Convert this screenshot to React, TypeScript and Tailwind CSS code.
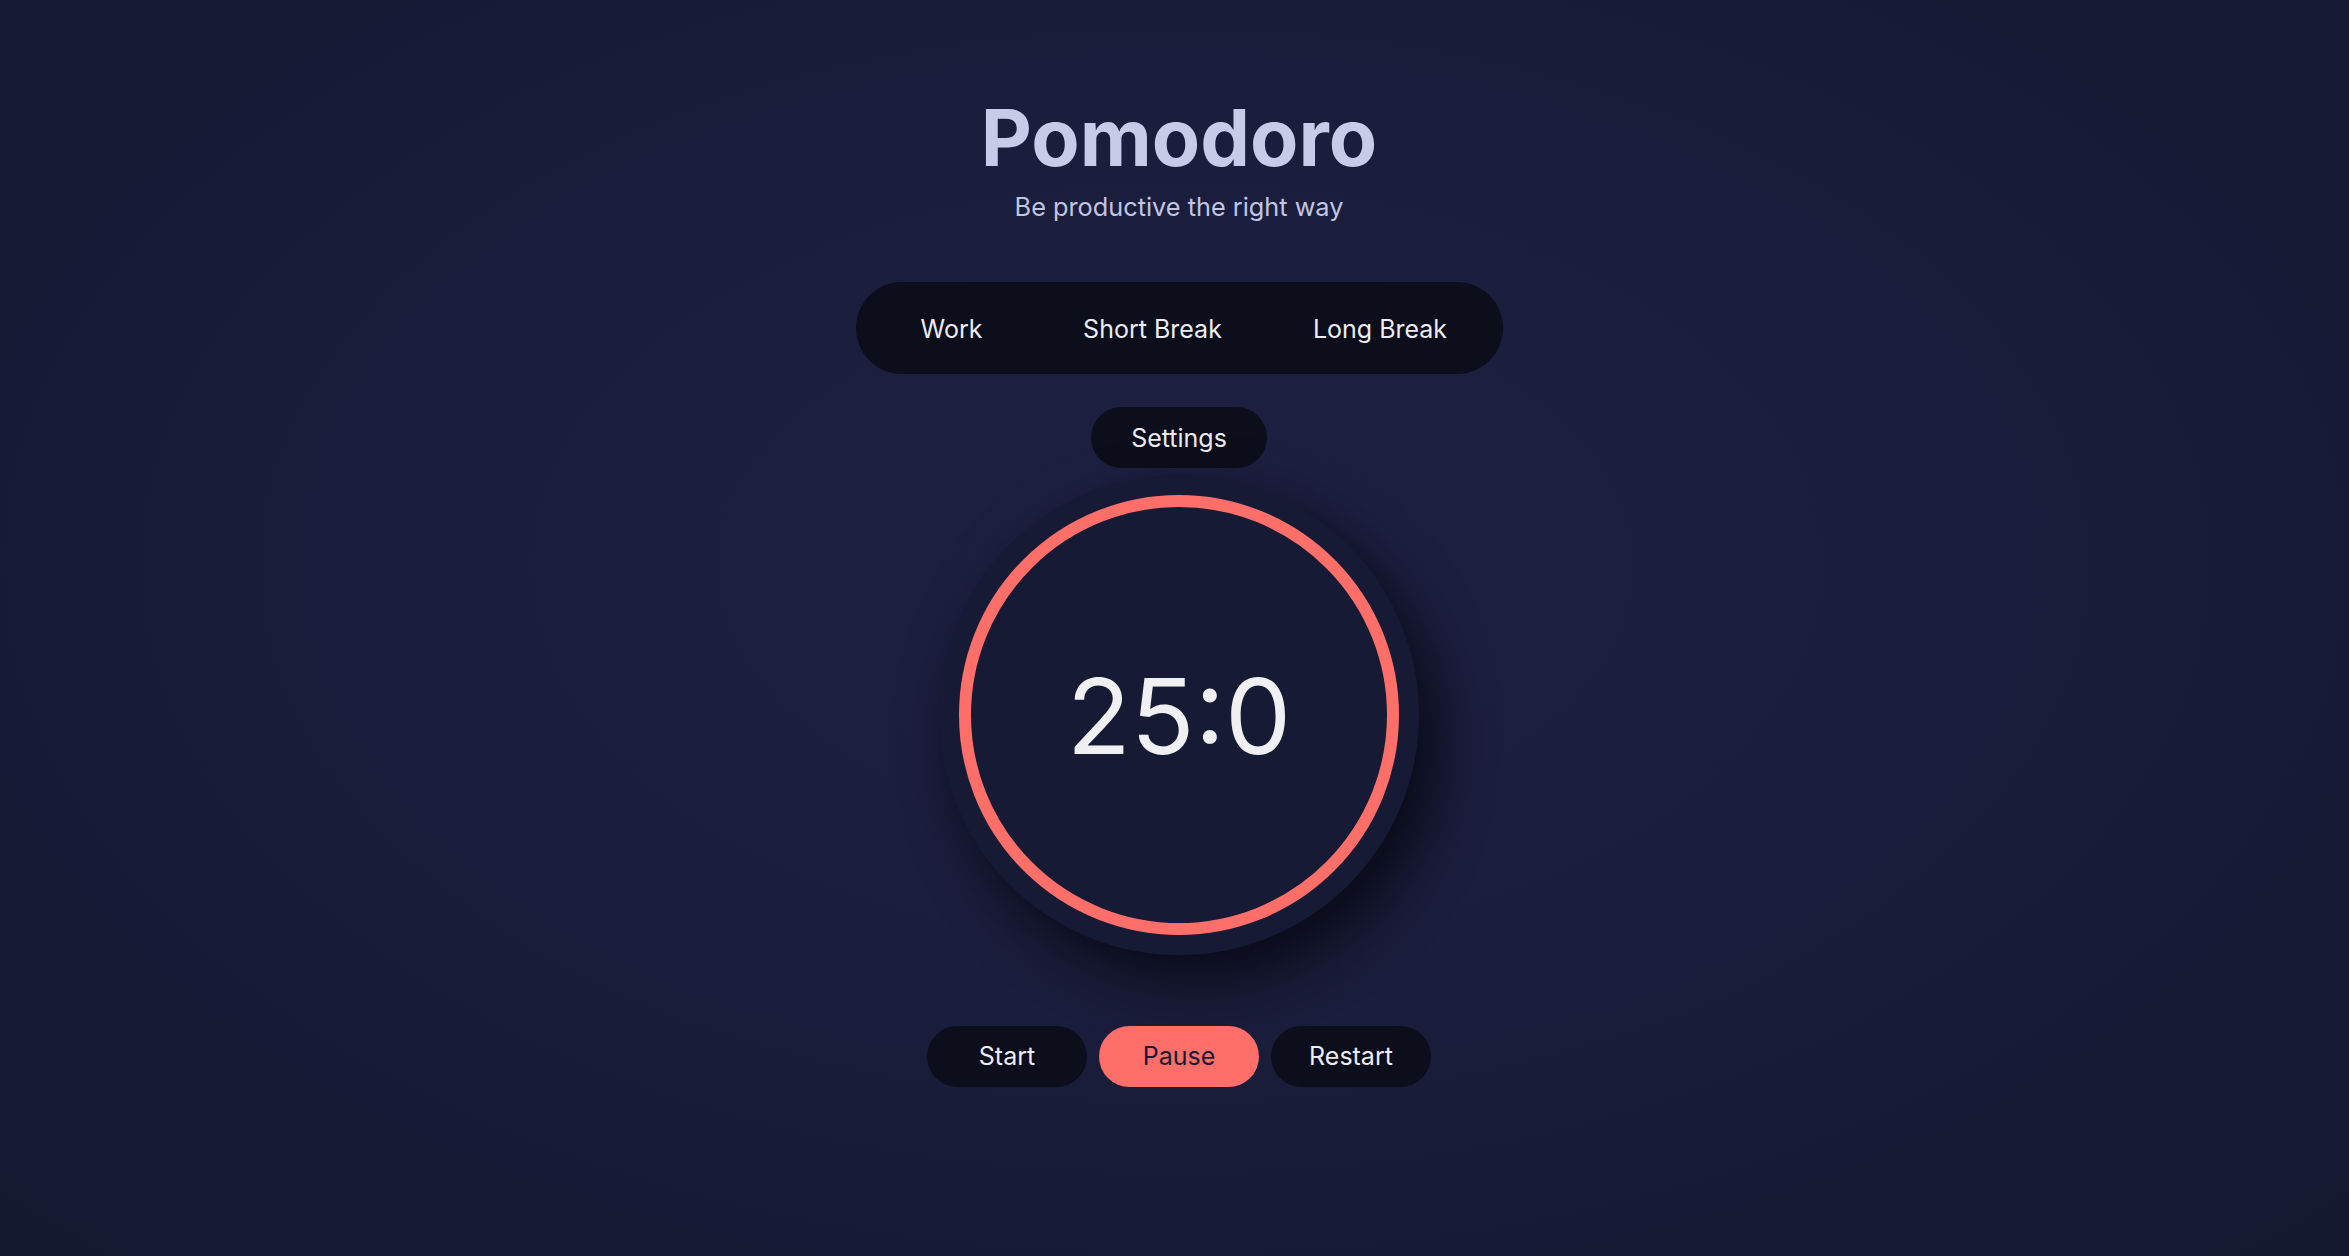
const tabs = [
  { label: 'Work', width: 'w-[172px]' },
  { label: 'Short Break', width: 'w-[230px]' },
  { label: 'Long Break', width: 'w-[225px]' },
];

function Controls() {
  return (
    <div className="mt-[71px] flex gap-[12px]">
      <button className="h-[61px] min-w-[160px] rounded-full bg-[#0c0e1c] px-[38px] text-[25px] text-[#ececf2]">
        Start
      </button>
      <button className="h-[61px] min-w-[160px] rounded-full bg-[#ff6f6a] px-[38px] text-[25px] text-[#161a33]">
        Pause
      </button>
      <button className="h-[61px] min-w-[160px] rounded-full bg-[#0c0e1c] px-[38px] text-[25px] text-[#ececf2]">
        Restart
      </button>
    </div>
  );
}

export default function App() {
  return (
    <div className="flex min-h-screen w-full flex-col items-center bg-[radial-gradient(ellipse_at_50%_45%,#1e2042_0%,#1a1d3b_45%,#141831_100%)] pl-[9px] font-['Inter',sans-serif]">
      <h1 className="mt-[98px] text-[79px] font-bold leading-none text-[#c8cbe8]">Pomodoro</h1>
      <p className="mt-[17px] text-[25.3px] leading-none text-[#c2c5e3]">Be productive the right way</p>

      <nav className="mt-[63px] flex h-[92px] items-center rounded-full bg-[#0c0e1c] px-[10px]">
        {tabs.map((t) => (
          <button key={t.label} className={`${t.width} pt-[3px] text-center text-[25px] text-[#ececf2]`}>
            {t.label}
          </button>
        ))}
      </nav>

      <button className="mt-[33px] h-[61px] w-[176px] rounded-full bg-[#0c0e1c] pt-[2px] text-[25px] text-[#ececf2]">
        Settings
      </button>

      <div className="mt-[7px] flex size-[480px] items-center justify-center rounded-full bg-[#161a34] shadow-[18px_24px_55px_rgba(6,7,16,0.85)]">
        <div className="flex size-[440px] items-center justify-center rounded-full border-[12px] border-[#ff6f6a]">
          <span className="text-[105px] font-normal leading-none text-[#f0f0f2]">25:0</span>
        </div>
      </div>

      <Controls />
    </div>
  );
}
